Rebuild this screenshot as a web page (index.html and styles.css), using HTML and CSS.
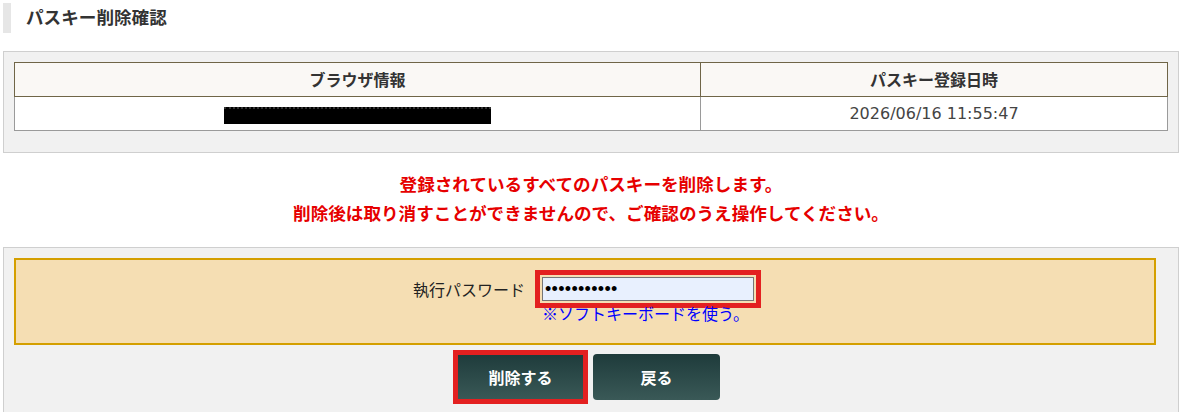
FILE: index.html
```html
<!DOCTYPE html>
<html lang="ja">
<head>
	<meta charset="UTF-8">
	<title>パスキー削除確認</title>
	<link rel="stylesheet" href="styles.css">
</head>
<body>
	<div id="page">
		<h2 class="ttl">パスキー削除確認</h2>

		<div class="box box-list">
			<table class="list">
				<tr>
					<th class="col-browser">ブラウザ情報</th>
					<th>パスキー登録日時</th>
				</tr>
				<tr>
					<td><span class="mask"></span></td>
					<td class="date">2026/06/16 11:55:47</td>
				</tr>
			</table>
		</div>

		<p class="warn">登録されているすべてのパスキーを削除します。<br>削除後は取り消すことができませんので、ご確認のうえ操作してください。</p>

		<div class="box box-form">
			<div class="pwbox">
				<label class="pw-label" for="pw">執行パスワード</label>
				<div class="pw-field">
					<input type="password" id="pw" class="pw mark" value="abcdefghijk">
					<a href="#" class="softkey">※ソフトキーボードを使う。</a>
				</div>
			</div>
			<div class="btns">
				<button class="btn mark">削除する</button>
				<button class="btn">戻る</button>
			</div>
		</div>
	</div>
</body>
</html>
```

FILE: styles.css
```css
*{ margin: 0; padding: 0; box-sizing: border-box; }
body{ font-family: "Noto Sans CJK JP", "Noto Sans", sans-serif; font-size: 16px; color: #333; background: #fff; }
#page{ padding: 3px; }

.ttl{ height: 30px; line-height: 28px; padding-left: 15px; border-left: 8px solid #e6e6e6; font-size: 17.6px; font-weight: bold; color: #333; }

.box{ background: #f1f1f1; border: 1px solid #cfcfcf; padding: 10px; }
.box-list{ margin-top: 18px; padding-bottom: 21px; }

.list{ width: 100%; border-collapse: collapse; }
.list th, .list td{ text-align: center; padding: 5px; line-height: 23px; font-size: 16px; }
.list th{ background: #faf8f5; border: 1px solid #6f6547; font-weight: bold; color: #333; }
.list td{ background: #fff; border: 1px solid #9a9a9a; color: #444; }
.list .col-browser{ width: 686px; }
.list .date{ font-family: "DejaVu Sans", "Noto Sans CJK JP", sans-serif; font-size: 16px; }
.mask{ display: inline-block; width: 267px; height: 17px; background: #000; vertical-align: middle; border-top: 2px dotted #333; }

.warn{ margin: 16px 0 20px; text-align: center; color: #e60000; font-size: 17.6px; font-weight: bold; line-height: 29px; }

.box-form{ padding-bottom: 14px; }
.pwbox{ width: 1142px; background: #f5deb3; border: 2px solid #d49f00; padding: 17px 0 18px; display: grid; grid-template-columns: 519px 1fr; }
.pw-label{ text-align: right; padding-right: 10px; line-height: 24px; color: #222; }
.pw-field{ padding-left: 7px; display: flex; flex-direction: column; align-items: flex-start; }
.pw{ width: 212px; height: 24px; border: 1px solid #767676; border-radius: 0; background: #e8f0fe; padding: 0 2px; font-family: "Liberation Sans", sans-serif; font-size: 18px; letter-spacing: 0.3px; color: #000; }
.softkey{ color: #0000ff; text-decoration: none; line-height: 23px; margin-top: 1px; }

.mark{ outline: 5px solid #e32020; outline-offset: 2px; }
.btn.mark{ outline-offset: -1px; border-radius: 0; }

.btns{ display: flex; justify-content: center; gap: 9px; margin-top: 9px; padding-right: 5px; }
.btn{ width: 127px; height: 46px; border: none; border-radius: 4px; background: linear-gradient(#1e3b3b, #3a5957); color: #fff; font-family: inherit; font-size: 16px; font-weight: bold; }
```
